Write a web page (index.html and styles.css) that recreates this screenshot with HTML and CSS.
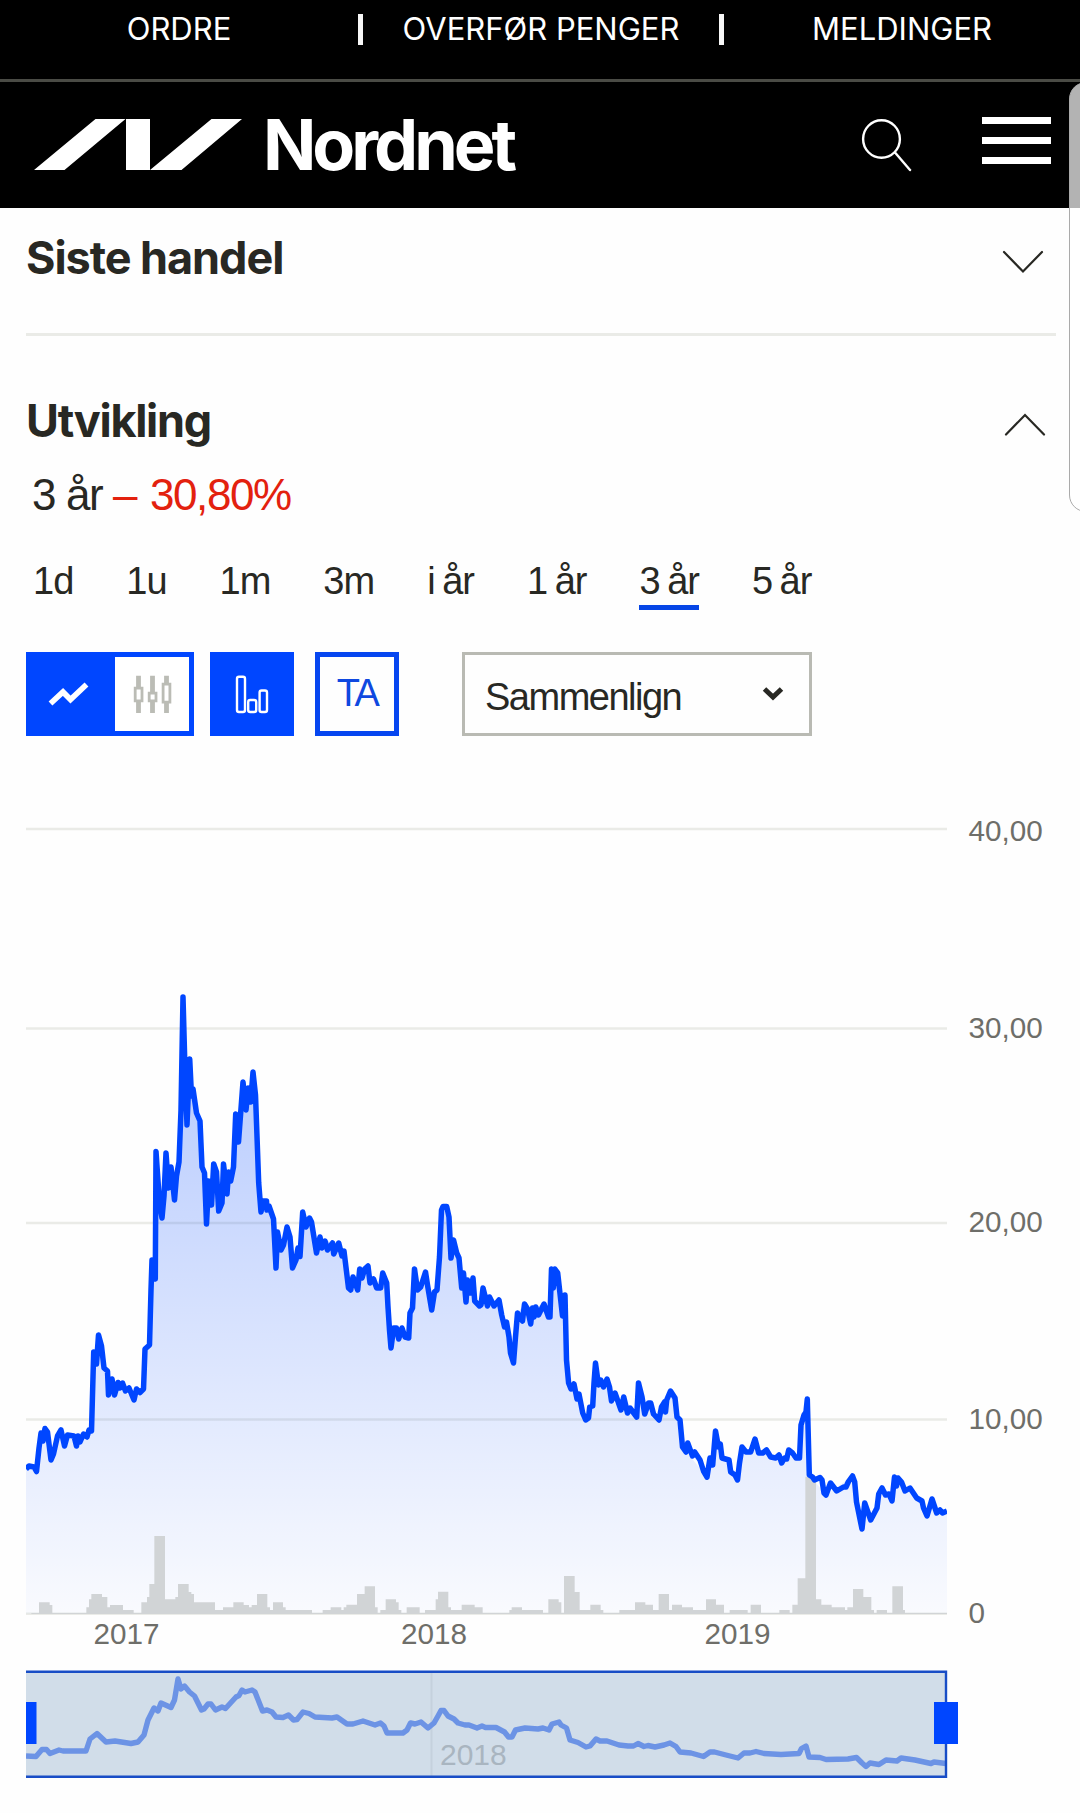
FILE: index.html
```html
<!DOCTYPE html>
<html lang="no">
<head>
<meta charset="utf-8">
<title>Nordnet</title>
<link rel="stylesheet" href="styles.css">
</head>
<body>
<header class="header">
  <nav class="topbar">
    <a class="topbar-link">ORDRE</a><span class="separator"></span>
    <a class="topbar-link">OVERFØR PENGER</a><span class="separator"></span>
    <a class="topbar-link">MELDINGER</a>
  </nav>
  <div class="brandbar">
    <svg class="logo-mark" width="208" height="51" viewBox="0 0 208 51" fill="#fff"><path d="M0 51L61.5 0H91.5L30.5 51zM92 0H116V51H92zM116 51L177.5 0H208L147.5 51z"/></svg>
    <span class="logo-text">Nordnet</span>
    <svg class="search-icon" width="52" height="54" viewBox="0 0 52 54" fill="none" stroke="#fff" stroke-width="2.4" stroke-linecap="round"><ellipse cx="21.5" cy="21" rx="18.4" ry="18.7"/><path d="M35 34.5L50 52"/></svg>
    <div class="menu-icon"><i></i><i></i><i></i></div>
  </div>
</header>
<main class="content">
  <section class="panel panel-collapsed">
    <h2 class="heading">Siste handel</h2>
    <svg class="chevron chevron-down" width="42" height="24" viewBox="0 0 42 24"><path d="M2 2L21 21.5L40 2"/></svg>
  </section>
  <section class="panel-open">
    <div class="panel-head">
      <h2 class="heading heading-open">Utvikling</h2>
      <svg class="chevron chevron-up" width="42" height="24" viewBox="0 0 42 24"><path d="M2 21.5L21 2L40 21.5"/></svg>
    </div>
    <p class="change">3 år <span class="negative">– 30,80%</span></p>
    <nav class="periods">
      <a>1d</a><a>1u</a><a>1m</a><a>3m</a><a>i år</a><a>1 år</a><a class="active">3 år</a><a>5 år</a>
    </nav>
    <div class="toolbar">
      <div class="toggle">
        <svg width="84" height="74" viewBox="31 657 84 74" fill="none" stroke="#fff" stroke-width="5.6"><path d="M50.5 703.5L63 692L70.5 699.5L86.5 684.5"/></svg>
        <span class="toggle-off"><svg width="74" height="74" viewBox="115 657 74 74" fill="#fff" stroke="#bbbcb5"><path stroke-width="4.8" d="M138.5 675.7V713M152.5 675.7V713M166.5 675.7V713"/><path stroke-width="2.8" d="M135.2 688.2h6.8v12.6h-6.8zM149.2 693.2h6.8v7.6h-6.8zM163.1 684.2h6.8v18h-6.8z"/></svg></span>
      </div>
      <div class="tool tool-volume"><svg width="84" height="84" viewBox="210 652 84 84" fill="none" stroke="#fff" stroke-width="2.4"><rect x="237" y="676.8" width="8" height="35.2" rx="2"/><rect x="248.2" y="700" width="8" height="12" rx="2"/><rect x="259.6" y="690.5" width="7.4" height="21.5" rx="2"/></svg></div>
      <div class="tool tool-ta">TA</div>
      <div class="select"><span>Sammenlign</span><svg width="22" height="16" viewBox="0 0 22 16" fill="none" stroke="#282823" stroke-width="5"><path d="M2.5 3L11 11L19.5 3"/></svg></div>
    </div>
    <svg class="chart" width="1054" height="860" viewBox="26 800 1054 860">
      <defs>
        <linearGradient id="area" gradientUnits="userSpaceOnUse" x1="0" y1="997" x2="0" y2="1614"><stop offset="0" stop-color="#0046ff" stop-opacity=".3"/><stop offset="1" stop-color="#0046ff" stop-opacity=".02"/></linearGradient>
        <clipPath id="plot"><rect x="26" y="800" width="921" height="814"/></clipPath>
        <path id="price" d="M26 1469L29 1466L34 1467L36.5 1471.5L39 1448L41 1433L43 1441L45 1428.5L47.5 1432L51 1460L53.5 1454L57.5 1436L61 1430L64.5 1446L67.5 1435L74 1436L76.5 1446L78 1436L80 1442L83.5 1434L87 1437L89 1430L91.5 1431L93 1377L93.7 1352L96.5 1364L98.5 1335L101.5 1346L104 1368L107.5 1371L108.5 1395L112 1379L114.5 1395L118 1382.5L120 1388L122.5 1383L125.5 1391L129 1388L134 1400L136.5 1389L140 1392.5L143.5 1389L145 1349L149.5 1345L151 1290L152 1260L155.3 1279L156 1151.5L159.5 1203L162 1218L164 1196L166 1153L168.5 1188L171 1167L174.5 1200L176.5 1176L179 1162L181 1110L183 997L185 1070L187 1125L189.7 1059L191.5 1096L193 1089L196.5 1113L200 1121L202 1167L204.5 1173L206.5 1224L208.7 1181L211.5 1205L213.7 1164L216.5 1172L218.7 1211L222 1203L223.5 1164L227 1194L228.5 1172L230.7 1181L233.5 1167L235.7 1114L238.5 1142L243 1082L246 1110L248 1088L250.7 1102L253 1072L255.5 1095L258.7 1183L261 1212L263 1201L266.5 1201L267 1210L269 1206L273.5 1219L276 1268L277.5 1232L281 1250L283.5 1245L287 1227L290 1237L292.5 1268L296 1260L298 1248L300 1256.5L302.7 1212L306 1227L309.5 1218L311.5 1222L316.5 1253L320 1237L322 1248L325 1241L327.5 1250L332.5 1243L333.7 1254L338.7 1243L342 1256L344 1251L348.5 1288L350.7 1290L353 1277L357.7 1290L359.7 1269L362 1278L364.7 1269L368 1266L370 1283L373.5 1279L376.7 1288L380.7 1288L382.7 1273L386.7 1283L388 1307L389.5 1330L391 1348L393.7 1328L396.5 1328L398.7 1339L402 1328L405 1337L408.7 1338L410 1313L412.5 1308L414.5 1269L417.5 1290L420.7 1287L425.5 1272L427.5 1285L431.7 1310L434.5 1292L437 1290L439.5 1257L441.5 1210L443 1206.5L446.7 1206.5L449 1217L451 1258L453.5 1240L456.7 1253L459 1258L461.7 1288L463.5 1273L466 1302L467.5 1280L470.5 1293L473 1278L474.7 1301L479.5 1306L481 1305L483 1288L487.5 1306L489.5 1297L494 1306L499 1300L501.7 1315L504.5 1327L506.5 1322L509 1337L510.5 1353L513.5 1363L515.5 1337L517.5 1313L522.5 1321L524.5 1304L527.5 1309L530.7 1324L532.5 1308L534 1317L535.7 1307L538.5 1315L544 1304L548.5 1317L550 1317L551.5 1269L553.3 1288L554.7 1269L557.7 1273L562.5 1316L565 1295L566.5 1360L568.6 1383L571 1389L574 1384L577 1399L579 1394L582.7 1413L585.7 1420L588.5 1418L589.7 1407L592.7 1406L594 1383L595.5 1363L598.5 1385L600.7 1380L603.5 1387L607 1379L609.5 1387L611.5 1401L615 1393L621 1410L623.7 1397L627.5 1413L630 1408L636.7 1417L638.5 1383L642 1397L644.7 1414L648.5 1403L650.7 1403L653.5 1414L659 1420L661.5 1407L664.6 1402L665.5 1412L666.7 1400L670.5 1391L675 1398L677 1417L680 1420L682.5 1447L686 1452L687.7 1443L692.5 1456L694.7 1452L700 1460L703.5 1471L707 1477L710 1458L712.7 1465L715.5 1431L718.5 1447L720.3 1444L722 1458L729 1460L730.7 1472L735 1475L737.5 1480L739.5 1463L742 1447L746 1452L750.7 1452L755 1439L758.7 1453L762.7 1453L766.5 1450L770.7 1457L775.7 1458L779 1455L781.7 1463L784.5 1458L786.7 1459L788.7 1450L792.5 1453L796 1458L799.5 1458L801 1425L804 1415L806 1412L807.3 1399L809.3 1475L812.5 1477L814.5 1480L820 1477.5L822 1480L824 1493L826 1495L830.5 1483L836.7 1491L843.5 1487L846 1487L848.5 1481.5L852.5 1476L854.7 1482L856.5 1502L862 1529L864.7 1503L870.7 1520L877 1508L878.7 1494L882 1488L885.5 1495L889 1494L892 1501L894.5 1477L896.5 1486L898 1478L901.5 1482L905 1491L910 1488L916.7 1498L922 1501L923.5 1508L927 1516L932 1499L936.7 1513L940 1510L942.5 1513L947 1511"/>
      </defs>
      <path class="grid" d="M26 829H947M26 1028.5H947M26 1223H947M26 1419.5H947M26 1613.7H947"/>
      <g clip-path="url(#plot)">
        <g fill="url(#area)"><path d="M26 1614V1469L29 1466L34 1467L36.5 1471.5L39 1448L41 1433L43 1441L45 1428.5L47.5 1432L51 1460L53.5 1454L57.5 1436L61 1430L64.5 1446L67.5 1435L74 1436L83.5 1436L91.5 1431L93.7 1352L96.5 1364L98.5 1335L101.5 1346L104 1368L107.5 1371L108.5 1395L118 1385L134 1400L143.5 1389L145 1349L149.5 1345L152 1260L155.3 1279L156 1151.5L162 1218L166 1153L168.5 1188L171 1167L174.5 1200L179 1162L181 1110L183 997L187 1125L189.7 1059L193 1089L200 1121L202 1167L204.5 1173L206.5 1224L208.7 1181L211.5 1205L213.7 1164L218.7 1211L222 1203L223.5 1164L227 1194L233.5 1167L235.7 1114L238.5 1142L243 1082L246 1110L253 1072L255.5 1095L258.7 1183L261 1212L266.5 1201L273.5 1219L276 1268L277.5 1232L281 1250L287 1227L290 1237L292.5 1268L300 1256.5L302.7 1212L306 1227L311.5 1222L316.5 1253L320 1237L338.7 1246L344 1251L348.5 1288L350.7 1290L353 1277L357.7 1290L359.7 1269L368 1266L370 1283L380.7 1288L382.7 1273L386.7 1283L391 1348L393.7 1328L408.7 1338L410 1313L412.5 1308L414.5 1269L417.5 1290L425.5 1272L431.7 1310L437 1290L439.5 1257L441.5 1210L446.7 1206.5L451 1258L453.5 1240L459 1258L461.7 1288L466 1302L467.5 1280L470.5 1293L473 1278L474.7 1301L481 1305L483 1288L487.5 1306L499 1300L506.5 1322L513.5 1363L517.5 1313L524.5 1304L530.7 1324L535.7 1307L544 1304L550 1317L551.5 1269L557.7 1273L562.5 1316L565 1295L566.5 1360L568.6 1383L574 1384L585.7 1420L592.7 1406L595.5 1363L598.5 1385L607 1379L611.5 1401L636.7 1417L638.5 1383L644.7 1414L650.7 1403L659 1420L670.5 1391L675 1398L680 1420L682.5 1447L707 1477L715.5 1431L722 1458L729 1460L737.5 1480L742 1447L750.7 1452L755 1439L758.7 1453L799.5 1458L801 1425L807.3 1399L809.3 1475L826 1495L852.5 1476L862 1529L864.7 1503L870.7 1520L882 1488L892 1501L894.5 1477L922 1501L927 1516L932 1499L936.7 1513L947 1511V1614z"/></g>
        <path class="volume" transform="translate(20 1230) scale(.33333)" d="M34 1155V1149H57V1117H89V1125H97V1149H199V1132H207V1108H214V1092H246V1101H262V1132H270V1125H309V1140H341V1149H364V1117H381V1101H388V1062H403V918H435V1108H466V1101H474V1062H506V1086H514V1092H522V1117H585V1140H609V1132H640V1117H671V1125H687V1132H695V1125H711V1092H742V1132H750V1140H759V1117H789V1132H797V1140H876V1149H908V1140H932V1132H964V1140H971V1132H979V1124H1011V1092H1034V1069H1065V1132H1073V1149H1081V1140H1097V1108H1128V1117H1136V1140H1144V1149H1160V1132H1199V1149H1215V1140H1247V1108H1254V1085H1285V1132H1293V1140H1325V1124H1364V1132H1388V1149H1468V1140H1475V1132H1506V1140H1569V1149H1585V1108H1616V1117H1624V1149H1632V1038H1664V1086H1679V1140H1711V1124H1742V1140H1750V1149H1798V1140H1845V1117H1876V1124H1899V1140H1916V1092H1947V1140H1956V1124H1986V1132H2019V1140H2058V1108H2088V1124H2112V1149H2129V1140H2183V1149H2192V1124H2223V1149H2278V1140H2309V1149H2317V1124H2333V1045H2356V740H2388V1108H2404V1124H2435V1132H2475V1140H2482V1132H2499V1077H2530V1101H2554V1140H2562V1149H2570V1140H2601V1149H2617V1069H2649V1140H2655V1149H2781V1155z"/>
        <use href="#price" class="price"/>
      </g>
      <g class="labels">
        <text x="968.5" y="840.5">40,00</text><text x="968.5" y="1038">30,00</text><text x="968.5" y="1232">20,00</text><text x="968.5" y="1429">10,00</text><text x="968.5" y="1622.5">0</text>
        <text x="93.5" y="1643.5">2017</text><text x="401" y="1643.5">2018</text><text x="704.5" y="1643.5">2019</text>
      </g>
    </svg>
    <svg class="navigator" width="1054" height="130" viewBox="26 1660 1054 130">
      <rect x="26" y="1671" width="920" height="106" fill="#d1dde9"/>
      <path d="M431.5 1672V1776" stroke="#c5d1dd" stroke-width="2"/>
      <text class="nav-label" x="440" y="1765">2018</text>
      <path class="nav-line" d="M26 1756L36 1756.5L42 1749.5L46.5 1749.5L50 1753.5L59 1750L63 1751L86 1751L90 1739L97 1733.5L106 1742L115 1741L131 1743.5L138 1742L144 1735L148 1720L154 1708L158 1711L161 1703L171 1707.5L174.5 1700L178 1679L181 1689L184.5 1686L189.5 1692L194.5 1696L201.5 1710L204 1709L208 1704L211 1704L215.5 1710L222 1707L225.5 1708.5L236 1697L239 1695.5L242 1690L245 1692L252 1690L255 1692L262.5 1711L267 1710L272 1712L276 1717L283 1717.5L288.5 1715L293.5 1720L297 1719.5L303 1712L309 1713.5L315 1717L332 1718L337 1717L347 1724L353 1724L363 1721L375 1725L380.5 1723L384 1726L387 1733L403 1733L407 1730L410.5 1723L415 1724L421 1722L428 1728L434 1723L438 1716L441 1710.5L444 1710.5L448 1716L454 1719L458 1723L465 1725L469 1725L477 1728L482 1726L485.5 1727.5L496 1727.5L504.5 1732L508.5 1737L512 1737L515.5 1730L525 1728L538 1729L543 1728L549 1730L552 1724L559 1722L561 1725L566.5 1728L570 1740L578 1742.5L586 1747L590 1746L596 1739L600 1741L607 1741L619 1745L628 1746L633.5 1746L638 1743.5L644 1746.5L648 1745.5L655 1747L664 1745L670 1743L676 1746.5L680 1752L691 1753L703.5 1756.5L710 1752L714.5 1752L726 1755L738 1758L744 1753L750 1753L756 1751.5L764 1753.5L781 1754.5L799 1753.5L801.5 1748.5L806 1746L809 1757L820 1757.5L826 1759.5L848 1759L856.5 1757.5L862 1763L866 1766.5L870 1763L879 1764.5L886 1760L897 1761L901 1758L915 1760L931 1763.5L934 1762L946 1763.5"/>
      <path d="M26 1671.7H946V1776.7H26" fill="none" stroke="#184dc6" stroke-width="2.4"/>
      <path d="M26 1702h10.5v42H26zM934 1702h24v42h-24z" fill="#0046ff"/>
    </svg>
  </section>
</main>
<div class="edge-panel"></div>
</body>
</html>
```
FILE: styles.css
```css
* { box-sizing: border-box; }
body {
  margin: 0;
  width: 1080px;
  height: 1813px;
  overflow: hidden;
  background: #fefefe;
  color: #282823;
  font-family: "Liberation Sans", Arial, sans-serif;
}
.header { background: #000; color: #fff; height: 208px; }
.topbar {
  display: grid;
  grid-template-columns: 358px 5px 356px 5px 356px;
  height: 82px;
  border-bottom: 3px solid #4a4b45;
}
.topbar-link {
  font: 400 31px/58px Inter, sans-serif;
  letter-spacing: 0;
  text-align: center;
  white-space: nowrap;
}
.separator { background: #f7f7f7; height: 31px; margin-top: 14px; }
.brandbar { display: flex; align-items: flex-start; height: 126px; padding: 0 29px 0 34px; }
.logo-mark { margin-top: 37px; }
.logo-text {
  font: 700 70px/126px Inter, sans-serif;
  letter-spacing: -4px;
  margin-left: 21px;
}
.search-icon { margin: 36px 70px 0 auto; }
.menu-icon { display: flex; flex-direction: column; gap: 13px; margin-top: 35px; }
.menu-icon i { width: 69px; height: 7px; background: #fff; }
.content { padding: 0 24px 0 26px; }
.panel, .panel-head { display: flex; justify-content: space-between; }
.panel-collapsed { height: 128px; border-bottom: 3px solid #eaebe7; }
.heading { margin: 0; font: 700 45px/100px Inter, sans-serif; letter-spacing: -1.05px; }
.heading-open { letter-spacing: -1.3px; }
.chevron { fill: none; stroke: #282823; stroke-width: 2.2; stroke-linecap: round; }
.chevron-down { margin: 42px 12px 0 0; }
.panel-head { height: 133px; padding-top: 35px; }
.chevron-up { margin: 42px 10px 0 0; }
.change { margin: 0 0 0 6px; font-size: 44px; line-height: 51px; letter-spacing: -1.4px; }
.negative { color: #e3210e; word-spacing: 3px; }
.periods { display: flex; gap: 53px; margin: 35px 0 0 7px; }
.periods a {
  height: 55px;
  font-size: 38px;
  line-height: 52px;
  letter-spacing: -1px;
  word-spacing: -2px;
  border-bottom: 5px solid transparent;
  white-space: nowrap;
}
.periods .active { border-color: #0646e6; }
.toolbar { display: flex; height: 84px; margin-top: 42px; }
.toggle { display: flex; width: 168px; border: 5px solid #0046ff; background: #0046ff; }
.toggle-off { background: #fff; width: 74px; height: 74px; }
.tool { width: 84px; height: 84px; }
.tool-volume { margin-left: 16px; background: #0046ff; }
.tool-ta {
  margin-left: 21px;
  border: 5px solid #0646f0;
  color: #0f48e0;
  font-size: 38px;
  line-height: 72px;
  letter-spacing: -2.5px;
  text-align: center;
}
.select {
  display: flex;
  justify-content: space-between;
  width: 350px;
  margin-left: 63px;
  padding: 0 25px 0 20px;
  border: 3px solid #b9bab3;
  font-size: 38px;
  line-height: 84px;
  letter-spacing: -1.5px;
}
.select svg { margin-top: 31px; }
.chart { display: block; margin-top: 64px; }
.grid { fill: none; stroke: #eaebe7; stroke-width: 2.6; }
.price { fill: none; stroke: #0046ff; stroke-width: 5.5; stroke-linejoin: round; }
.volume { fill: #d1d4d6; }
.labels { fill: #6e6e69; font-size: 29.7px; }
.navigator { display: block; }
.nav-label { fill: #a9b5c0; font-size: 30px; }
.nav-line { fill: none; stroke: #6c93e5; stroke-width: 5.4; stroke-linejoin: round; }
.edge-panel {
  position: absolute;
  left: 1069px;
  top: 82px;
  width: 40px;
  height: 430px;
  border: 1px solid #aaa;
  border-radius: 17px;
  background: rgba(255, 255, 255, 0.7);
  clip-path: inset(0 29px 0 0);
}
```
